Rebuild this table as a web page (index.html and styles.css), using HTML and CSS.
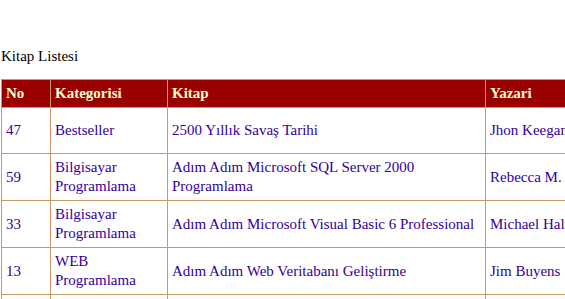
FILE: index.html
```html
<!DOCTYPE html>
<html lang="tr">
<head>
<meta charset="utf-8">
<title>Kitap Listesi</title>
<link rel="stylesheet" href="styles.css">
</head>
<body>
<div class="title">Kitap Listesi</div>
<table class="grid">
  <colgroup>
    <col class="c-no">
    <col class="c-kat">
    <col class="c-kitap">
    <col class="c-yazar">
  </colgroup>
  <thead>
    <tr class="head">
      <th>No</th>
      <th>Kategorisi</th>
      <th>Kitap</th>
      <th>Yazari</th>
    </tr>
  </thead>
  <tbody>
    <tr>
      <td>47</td>
      <td>Bestseller</td>
      <td>2500 Yıllık Savaş Tarihi</td>
      <td>Jhon Keegan</td>
    </tr>
    <tr>
      <td>59</td>
      <td>Bilgisayar Programlama</td>
      <td>Adım Adım Microsoft SQL Server 2000 Programlama</td>
      <td>Rebecca M. Riordan</td>
    </tr>
    <tr>
      <td>33</td>
      <td>Bilgisayar Programlama</td>
      <td>Adım Adım Microsoft Visual Basic 6 Professional</td>
      <td>Michael Halvorson</td>
    </tr>
    <tr>
      <td>13</td>
      <td>WEB Programlama</td>
      <td>Adım Adım Web Veritabanı Geliştirme</td>
      <td>Jim Buyens</td>
    </tr>
    <tr>
      <td>21</td>
      <td>Bilgisayar Programlama</td>
      <td>Adım Adım Microsoft Visual C# .NET</td>
      <td>John Sharp</td>
    </tr>
  </tbody>
</table>
</body>
</html>
```

FILE: styles.css
```css
html, body {
  overflow: hidden;
}

body {
  margin: 0;
  padding: 47px 0 0 1px;
  background: #ffffff;
  color: #000000;
  font-family: "Liberation Serif", "Times New Roman", serif;
  font-size: 15px;
  line-height: 19px;
}

.title {
  margin: 0 0 13px 0;
}

.grid {
  border-collapse: collapse;
  table-layout: fixed;
  width: 644px;
  border: 1px solid #cc9966;
  background: #ffffff;
}

.c-no { width: 49px; }
.c-kat { width: 117px; }
.c-kitap { width: 318px; }
.c-yazar { width: 160px; }

.grid th,
.grid td {
  border: 1px solid #cc9966;
  padding: 4px;
  text-align: left;
  vertical-align: middle;
}

.head th {
  background: #990000;
  color: #ffffcc;
  font-weight: bold;
}

.grid td {
  color: #330099;
  height: 37px;
}
```
